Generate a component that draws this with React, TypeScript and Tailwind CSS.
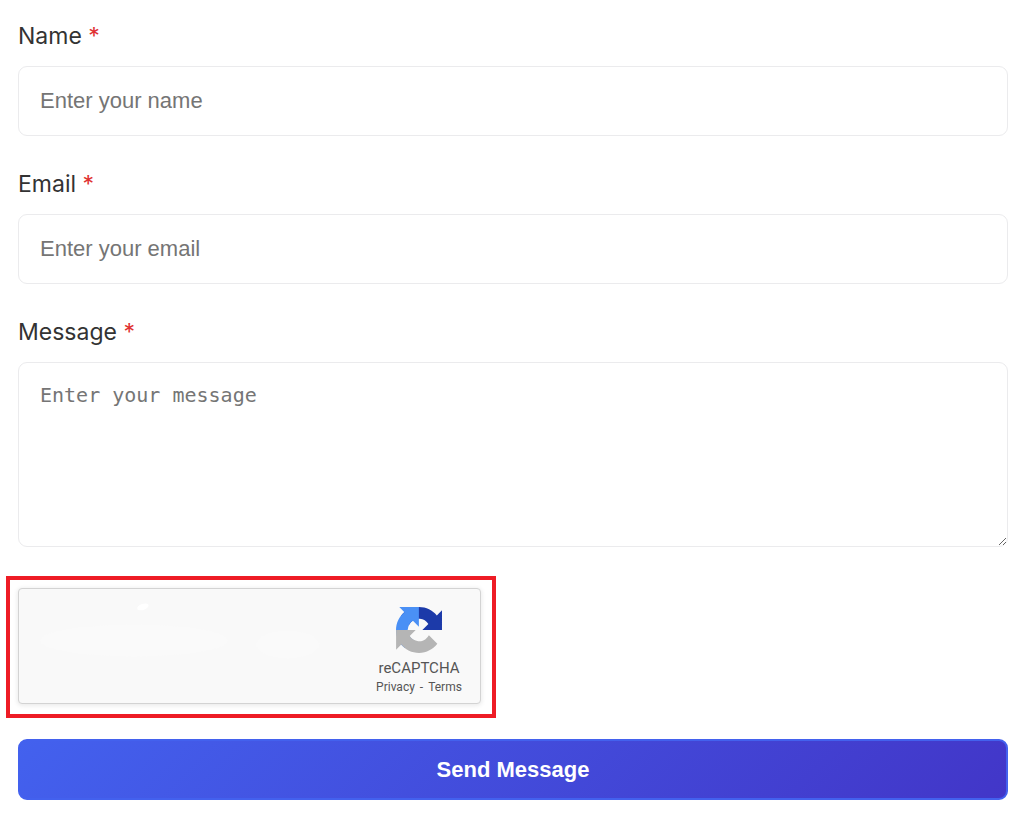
import React, { useState, FormEvent } from "react";

interface FieldLabelProps {
  htmlFor: string;
  text: string;
}

const inputStyle =
  "block h-[70px] w-full rounded-[9px] border border-[#ebebed] bg-white px-[21px] font-['Liberation_Sans',Arial,sans-serif] text-[22px] text-[#333333] placeholder:text-[#757575] outline-none focus:border-[#4361ee]";

const FieldLabel = ({ htmlFor, text }: FieldLabelProps) => (
  <label htmlFor={htmlFor} className="mb-3 block text-[23px] leading-[35px] text-[#333333]">
    {text} <span className="text-[#e03131]">*</span>
  </label>
);

const RecaptchaLogo = () => (
  <svg viewBox="0 0 64 64" className="size-[46px]" aria-hidden="true">
    <path
      fill="#1c3aa9"
      d="M64 31.955l-.033-1.37V4.687l-7.16 7.16C50.948 4.674 42.033.093 32.05.093c-10.4 0-19.622 4.96-25.458 12.64l11.736 11.86a15.55 15.55 0 0 1 4.754-5.334c2.05-1.6 4.952-2.906 8.968-2.906.485 0 .86.057 1.135.163 4.976.393 9.288 3.14 11.828 7.124l-8.307 8.307L64 31.953"
    />
    <path
      fill="#4a90f5"
      d="M31.862.094l-1.37.033H4.594l7.16 7.16C4.58 13.147 0 22.06 0 32.046c0 10.4 4.96 19.622 12.64 25.458L24.5 45.768a15.55 15.55 0 0 1-5.334-4.754c-1.6-2.05-2.906-4.952-2.906-8.968 0-.485.057-.86.163-1.135.393-4.976 3.14-9.288 7.124-11.828l8.307 8.307L31.86.095"
    />
    <path
      fill="#b5b5b5"
      d="M.094 32.045l.033 1.37v25.898l7.16-7.16c5.86 7.173 14.774 11.754 24.76 11.754 10.4 0 19.622-4.96 25.458-12.64l-11.736-11.86a15.55 15.55 0 0 1-4.754 5.334c-2.05 1.6-4.952 2.906-8.968 2.906-.485 0-.86-.057-1.135-.163-4.976-.393-9.288-3.14-11.828-7.124l8.307-8.307c-10.522.04-22.4.066-27.295-.005"
    />
  </svg>
);

const Recaptcha = () => (
  <div className="-ml-3 mt-[29px] w-fit max-w-full border-4 border-[#ee1c25] pb-[10px] pl-2 pr-[11px] pt-2">
    <div className="flex h-[116px] w-[463px] max-w-full justify-between rounded border border-[#d3d3d3] bg-[#f9f9f9] shadow-[0_1px_4px_1px_rgba(0,0,0,0.08)]">
      {/* faint light patches on the empty side */}
      <svg viewBox="0 0 340 115" className="h-full min-w-0 flex-1" aria-hidden="true">
        <ellipse cx="115" cy="52" rx="95" ry="16" fill="#fafafa" />
        <ellipse cx="270" cy="56" rx="32" ry="14" fill="#fafafa" />
        <ellipse cx="124" cy="18" rx="6" ry="3" fill="#ffffff" transform="rotate(-20 124 18)" />
      </svg>
      <div className="flex w-[122px] shrink-0 flex-col items-center pt-[18px] font-[Roboto,sans-serif] text-[#555555]">
        <RecaptchaLogo />
        <div className="mt-[3px] text-[15px] leading-6">reCAPTCHA</div>
        <div className="text-xs leading-3.5">
          <a href="#privacy">Privacy</a>
          <span className="px-[5px]">-</span>
          <a href="#terms">Terms</a>
        </div>
      </div>
    </div>
  </div>
);

const ContactForm = () => {
  const [name, setName] = useState("");
  const [email, setEmail] = useState("");
  const [message, setMessage] = useState("");

  function handleSubmit(e: FormEvent<HTMLFormElement>) {
    e.preventDefault();
    if (!name.trim() || !email.trim() || !message.trim()) return;
    setName("");
    setEmail("");
    setMessage("");
  }

  return (
    <form onSubmit={handleSubmit} noValidate className="bg-white pb-4 pl-[18px] pr-4 pt-[19px] font-[Inter,sans-serif]">
      <div className="mb-[31px]">
        <FieldLabel htmlFor="name" text="Name" />
        <input
          id="name"
          type="text"
          placeholder="Enter your name"
          value={name}
          onChange={(e) => setName(e.target.value)}
          className={inputStyle}
        />
      </div>

      <div className="mb-[31px]">
        <FieldLabel htmlFor="email" text="Email" />
        <input
          id="email"
          type="email"
          placeholder="Enter your email"
          value={email}
          onChange={(e) => setEmail(e.target.value)}
          className={inputStyle}
        />
      </div>

      <div>
        <FieldLabel htmlFor="message" text="Message" />
        <textarea
          id="message"
          placeholder="Enter your message"
          value={message}
          onChange={(e) => setMessage(e.target.value)}
          className="block h-[185px] w-full resize-y rounded-[9px] border border-[#ebebed] bg-white px-[21px] py-5 font-['DejaVu_Sans_Mono',monospace] text-xl leading-6 text-[#333333] outline-none placeholder:text-[#757575] focus:border-[#4361ee]"
        />
      </div>

      <Recaptcha />

      <button
        type="submit"
        className="mt-[21px] h-[61px] w-full cursor-pointer rounded-[9px] border-2 border-[#4361ee] bg-[linear-gradient(135deg,#4361ee,#4236c8)] font-['Liberation_Sans',Arial,sans-serif] text-[22px] font-bold text-white"
      >
        Send Message
      </button>
    </form>
  );
};

export default function App() {
  return <ContactForm />;
}
